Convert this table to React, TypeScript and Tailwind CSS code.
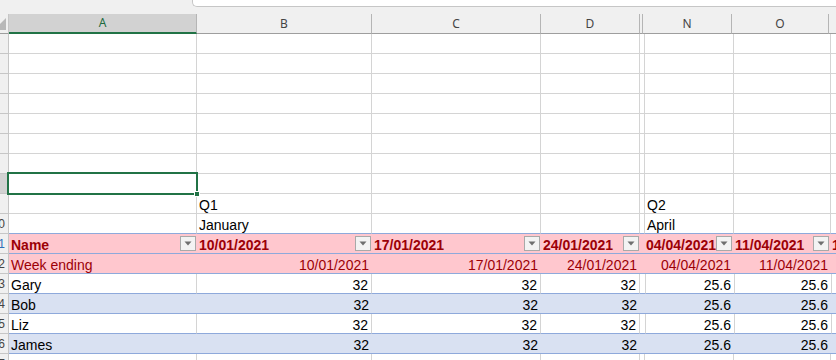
const COLS = [
  { id: "A", w: "w-[188px]" },
  { id: "B", w: "w-[175px]" },
  { id: "C", w: "w-[169px]" },
  { id: "D", w: "w-[99px]" },
  { id: "", w: "w-[3px]" },
  { id: "N", w: "w-[89px]" },
  { id: "O", w: "w-[97px]" },
  { id: "P", w: "w-[140px]" },
];

type Kind = "plain" | "edge" | "head" | "sub" | "white" | "band";

type Row = { n: number; kind: Kind; cells?: Record<string, string> };

const dates = { B: "10/01/2021", C: "17/01/2021", D: "24/01/2021", N: "04/04/2021", O: "11/04/2021", P: "18/04/2021" };
const nums = { B: "32", C: "32", D: "32", N: "25.6", O: "25.6", P: "25.6" };

const ROWS: Row[] = [
  { n: 1, kind: "plain" },
  { n: 2, kind: "plain" },
  { n: 3, kind: "plain" },
  { n: 4, kind: "plain" },
  { n: 5, kind: "plain" },
  { n: 6, kind: "plain" },
  { n: 7, kind: "plain" },
  { n: 8, kind: "plain" },
  { n: 9, kind: "plain", cells: { B: "Q1", N: "Q2" } },
  { n: 10, kind: "edge", cells: { B: "January", N: "April" } },
  { n: 11, kind: "head", cells: { A: "Name", ...dates } },
  { n: 12, kind: "sub", cells: { A: "Week ending", ...dates } },
  { n: 13, kind: "white", cells: { A: "Gary", ...nums } },
  { n: 14, kind: "band", cells: { A: "Bob", ...nums } },
  { n: 15, kind: "white", cells: { A: "Liz", ...nums } },
  { n: 16, kind: "band", cells: { A: "James", ...nums } },
  { n: 17, kind: "plain" },
];

const kindClass: Record<Kind, string> = {
  plain: "bg-white border-r border-b border-[#d4d4d4] text-black",
  edge: "bg-white border-r border-r-[#d4d4d4] border-b border-b-[#8ea9db] text-black",
  head: "bg-[#ffc7ce] border-b border-b-[#8ea9db] text-[#9c0006] font-bold",
  sub: "bg-[#ffc7ce] border-b border-b-[#8ea9db] text-[#9c0006]",
  white: "bg-white border-r border-r-[#d4d4d4] border-b border-b-[#8ea9db] text-black",
  band: "bg-[#d9e1f2] border-b border-b-[#8ea9db] text-black",
};

function FilterButton() {
  return (
    <div className="absolute right-[1px] top-[2px] w-[16px] h-[15px] bg-[#f3f3f3] border border-[#a9a9a9] flex items-center justify-center">
      <svg width="8" height="5" viewBox="0 0 8 5">
        <polygon points="0.5,0.5 7.5,0.5 4,4.5" fill="#6f6f6f" />
      </svg>
    </div>
  );
}

function RowHeader({ n }: { n: number }) {
  return (
    <div
      className={`w-[9px] h-[20px] shrink-0 overflow-hidden border-r border-b border-[#c6c6c6] flex items-end justify-end pr-[3px] ${
        n === 8 ? "bg-[#d2d2d2]" : "bg-[#f0f0f0]"
      }`}
    >
      {n >= 10 && (
        <span className={`shrink-0 text-[12px] leading-[17px] ${n === 11 ? "text-[#2f6fb8]" : "text-[#444]"}`}>{n}</span>
      )}
    </div>
  );
}

function GridRow({ row }: { row: Row }) {
  return (
    <div className="flex h-[20px]">
      <RowHeader n={row.n} />
      {COLS.map((c) => {
        const text = c.id ? row.cells?.[c.id] : undefined;
        const rightAlign = c.id !== "A" && (row.kind === "sub" || row.kind === "white" || row.kind === "band");
        return (
          <div
            key={c.id || "gap"}
            className={`${c.w} shrink-0 h-full relative flex items-end whitespace-nowrap overflow-hidden px-[2px] text-[14px] leading-[16px] ${kindClass[row.kind]} ${
              rightAlign ? "justify-end pr-[3px]" : "justify-start"
            }`}
          >
            {text && <span>{text}</span>}
            {row.kind === "head" && c.id && c.id !== "P" && <FilterButton />}
          </div>
        );
      })}
    </div>
  );
}

export default function App() {
  return (
    <div className="w-[836px] h-[360px] overflow-hidden bg-white relative font-['Liberation_Sans',Arial,sans-serif]">
      {/* strip under the ribbon, formula box edge */}
      <div className="h-[14px] flex bg-[#f0f0f0]">
        <div className="w-[192px] shrink-0" />
        <div className="flex-1 h-[7px] bg-white border-l border-b border-[#c6c6c6] rounded-bl-[5px]" />
      </div>

      {/* column letters */}
      <div className="flex h-[20px] bg-[#f0f0f0] font-['Noto_Sans',sans-serif] text-[12px]">
        <div className="w-[9px] shrink-0 h-full border-r border-b border-r-[#c6c6c6] border-b-[#9e9e9e] overflow-hidden relative">
          <svg className="absolute left-0 top-[4px]" width="8" height="13" viewBox="0 0 8 13">
            <polygon points="6,0 6,12 -6,12" fill="#b8b8b8" />
          </svg>
        </div>
        {COLS.map((c) =>
          c.id === "A" ? (
            <div
              key="A"
              className={`${c.w} shrink-0 h-full flex items-center justify-center bg-[#d2d2d2] text-[#1d6b40] border-r border-r-[#b5b5b5] border-b-2 border-b-[#217346]`}
            >
              A
            </div>
          ) : (
            <div
              key={c.id || "gap"}
              className={`${c.w} shrink-0 h-full flex items-center justify-center text-[#444] border-r border-b border-r-[#b5b5b5] border-b-[#9e9e9e]`}
            >
              {c.id}
            </div>
          )
        )}
      </div>

      {ROWS.map((r) => (
        <GridRow key={r.n} row={r} />
      ))}

      {/* active cell A8 */}
      <div className="absolute left-[7px] top-[172px] w-[191px] h-[23px] border-2 border-[#217346] pointer-events-none">
        <div className="absolute -right-[4px] -bottom-[4px] w-[6px] h-[6px] bg-[#217346] border border-white" />
      </div>
    </div>
  );
}
